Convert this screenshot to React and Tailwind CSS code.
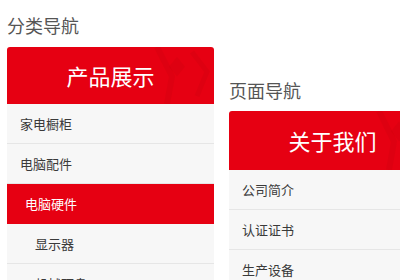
import React from "react";

const font = { fontFamily: '"Noto Sans CJK SC", "Noto Sans", sans-serif' };

function Deco() {
  return (
    <svg className="absolute inset-0 w-full h-full pointer-events-none" viewBox="0 0 207 58" preserveAspectRatio="none">
      <path d="M150 0 L165 30 L160 58" stroke="#b8000c" strokeOpacity="0.15" strokeWidth="6" fill="none" />
      <path d="M185 5 L200 25 L190 50" stroke="#b8000c" strokeOpacity="0.15" strokeWidth="5" fill="none" />
      <path d="M170 10 L178 20 L170 30 L162 20 Z" fill="#b8000c" fillOpacity="0.15" />
    </svg>
  );
}

function Item({ children, active, indent }) {
  return (
    <div
      className={
        "h-[40px] flex items-center text-[13px] border-b " +
        (active
          ? "bg-[#e60012] text-white border-[#e60012] pl-[18px]"
          : "bg-[#f7f7f7] text-[#3a3a3a] border-[#e6e6e6] " + (indent ? "pl-[28px]" : "pl-[13px]"))
      }
    >
      {children}
    </div>
  );
}

export default function App() {
  return (
    <div className="w-[400px] h-[280px] overflow-hidden bg-white flex items-start pl-[7px] gap-[15px]" style={font}>
      <div className="w-[207px] shrink-0">
        <div className="mt-[13px] mb-[10px] text-[18px] leading-[24px] text-[#555]">分类导航</div>
        <div className="relative h-[57px] bg-[#e60012] rounded-t-[3px] flex items-center justify-center text-white text-[22px] overflow-hidden">
          <Deco />
          <span className="relative">产品展示</span>
        </div>
        <Item>家电橱柜</Item>
        <Item>电脑配件</Item>
        <Item active>电脑硬件</Item>
        <Item indent>显示器</Item>
        <Item indent>机械硬盘</Item>
      </div>
      <div className="w-[207px] shrink-0">
        <div className="mt-[78px] mb-[9px] text-[18px] leading-[24px] text-[#555]">页面导航</div>
        <div className="relative h-[59px] bg-[#e60012] rounded-t-[3px] flex items-center justify-center text-white text-[22px] overflow-hidden">
          <Deco />
          <span className="relative">关于我们</span>
        </div>
        <Item>公司简介</Item>
        <Item>认证证书</Item>
        <Item>生产设备</Item>
      </div>
    </div>
  );
}
